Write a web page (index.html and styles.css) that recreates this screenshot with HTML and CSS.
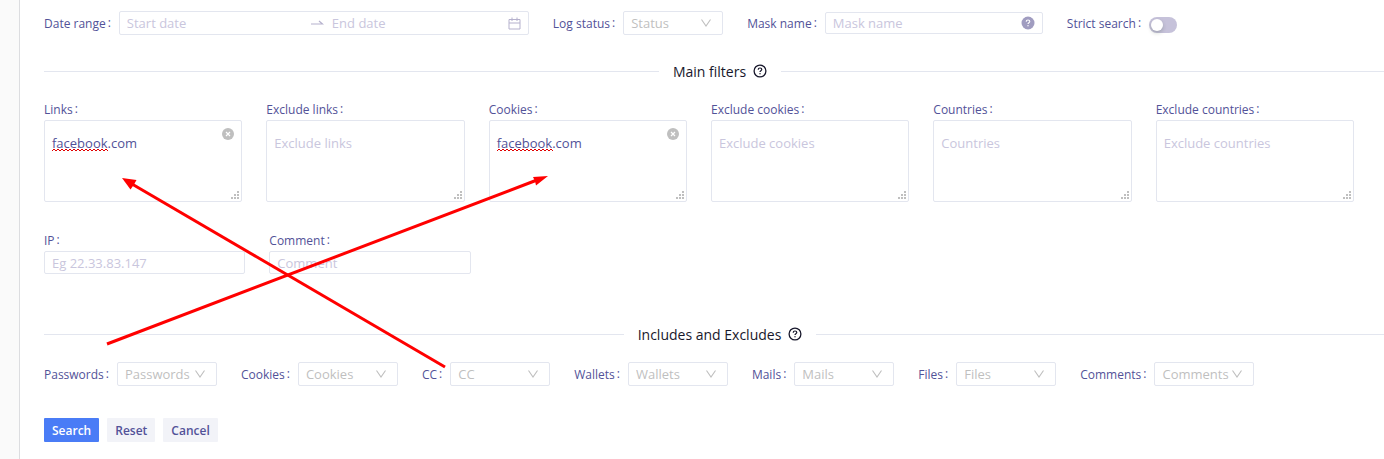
FILE: index.html
```html
<!doctype html>
<html lang="en">
<head>
<meta charset="UTF-8">
<title>Log search</title>
<meta name="viewport" content="width=device-width, initial-scale=1.0">
<link rel="stylesheet" href="styles.css">
</head>
<body>
<svg class="sprite" width="0" height="0" aria-hidden="true">
  <symbol id="chevron" viewBox="0 0 12 12">
    <path d="M1.5 2.5L6 9l4.500-6.500" fill="none" stroke="currentColor" stroke-width="1.100"/>
  </symbol>
  <symbol id="question" viewBox="0 0 14 14">
    <circle cx="7" cy="7" r="5.900" fill="none" stroke="currentColor" stroke-width="1.300"/>
    <path d="M5.200 5.800C5.200 4.600 6 4 7 4s1.800.7 1.800 1.600c0 1.200-1.800 1.200-1.800 2.500" fill="none" stroke="currentColor" stroke-width="1.200"/>
    <rect x="6.400" y="9.100" width="1.200" height="1.200" fill="currentColor"/>
  </symbol>
  <symbol id="question-filled" viewBox="0 0 14 14">
    <circle cx="7" cy="7" r="6.500" fill="currentColor"/>
    <path d="M5.200 5.800C5.200 4.600 6 4 7 4s1.800.7 1.800 1.600c0 1.200-1.800 1.200-1.800 2.500" fill="none" stroke="#fff" stroke-width="1.100"/>
    <rect x="6.400" y="9.100" width="1.200" height="1.200" fill="#fff"/>
  </symbol>
  <symbol id="clear" viewBox="0 0 12 12">
    <circle cx="6" cy="6" r="6" fill="currentColor"/>
    <path d="M4 4l4 4M8 4l-4 4" stroke="#fff" stroke-width="1.200"/>
  </symbol>
  <symbol id="grip" viewBox="0 0 8 8">
    <path d="M6 0h2v2h-2zM3 3h2v2h-2zM6 3h2v2h-2zM0 6h2v2h-2zM3 6h2v2h-2zM6 6h2v2h-2z" fill="currentColor"/>
  </symbol>
  <symbol id="squiggle" viewBox="0 0 56 4">
    <path d="M0 3l2-2 2 2 2-2 2 2 2-2 2 2 2-2 2 2 2-2 2 2 2-2 2 2 2-2 2 2 2-2 2 2 2-2 2 2 2-2 2 2 2-2 2 2 2-2 2 2 2-2 2 2 2-2 2 2" fill="none" stroke="#e00000" stroke-width="1"/>
  </symbol>
</svg>

<main>
<form>
  <div class="row top">
    <div class="field">
      <label for="start">Date range</label>
      <div class="range">
        <input id="start" type="text" placeholder="Start date">
        <svg class="arrow" width="13" height="12" viewBox="0 0 13 12"><path d="M0 7h11.500L8 4" fill="none" stroke="currentColor" stroke-width="1.200"/></svg>
        <input type="text" placeholder="End date" aria-label="End date">
        <svg class="calendar" width="13" height="13" viewBox="0 0 13 13"><path d="M1 2.500h11v9.500h-11zM1 6h11M4 .5v3.500M9 .5v3.500" fill="none" stroke="currentColor"/></svg>
      </div>
    </div>
    <div class="field">
      <label for="status">Log status</label>
      <div class="select">
        <select id="status"><option>Status</option></select>
        <svg><use href="#chevron"/></svg>
      </div>
    </div>
    <div class="field">
      <label for="mask">Mask name</label>
      <div class="mask">
        <input id="mask" type="text" placeholder="Mask name">
        <svg><use href="#question-filled"/></svg>
      </div>
    </div>
    <div class="field">
      <label for="strict">Strict search</label>
      <input class="switch" id="strict" type="checkbox">
    </div>
  </div>

  <h2>Main filters <svg><use href="#question"/></svg></h2>

  <div class="areas">
    <div class="column">
      <label for="links">Links</label>
      <div class="area">
        <textarea id="links" placeholder="Links" spellcheck="false">facebook.com</textarea>
        <svg class="squiggle"><use href="#squiggle"/></svg>
        <button type="button" class="clear" aria-label="Clear"><svg><use href="#clear"/></svg></button>
        <svg class="grip"><use href="#grip"/></svg>
      </div>
    </div>
    <div class="column">
      <label for="exlinks">Exclude links</label>
      <div class="area">
        <textarea id="exlinks" placeholder="Exclude links"></textarea>
        <svg class="grip"><use href="#grip"/></svg>
      </div>
    </div>
    <div class="column">
      <label for="cookies">Cookies</label>
      <div class="area">
        <textarea id="cookies" placeholder="Cookies" spellcheck="false">facebook.com</textarea>
        <svg class="squiggle"><use href="#squiggle"/></svg>
        <button type="button" class="clear" aria-label="Clear"><svg><use href="#clear"/></svg></button>
        <svg class="grip"><use href="#grip"/></svg>
      </div>
    </div>
    <div class="column">
      <label for="excookies">Exclude cookies</label>
      <div class="area">
        <textarea id="excookies" placeholder="Exclude cookies"></textarea>
        <svg class="grip"><use href="#grip"/></svg>
      </div>
    </div>
    <div class="column">
      <label for="countries">Countries</label>
      <div class="area">
        <textarea id="countries" placeholder="Countries"></textarea>
        <svg class="grip"><use href="#grip"/></svg>
      </div>
    </div>
    <div class="column">
      <label for="excountries">Exclude countries</label>
      <div class="area">
        <textarea id="excountries" placeholder="Exclude countries"></textarea>
        <svg class="grip"><use href="#grip"/></svg>
      </div>
    </div>
  </div>

  <div class="inputs">
    <div class="column">
      <label for="ip">IP</label>
      <input id="ip" type="text" placeholder="Eg 22.33.83.147">
    </div>
    <div class="column">
      <label for="comment">Comment</label>
      <input id="comment" type="text" placeholder="Comment">
    </div>
  </div>

  <h2>Includes and Excludes <svg><use href="#question"/></svg></h2>

  <div class="row">
    <div class="field">
      <label for="has-passwords">Passwords</label>
      <div class="select">
        <select id="has-passwords"><option>Passwords</option></select>
        <svg><use href="#chevron"/></svg>
      </div>
    </div>
    <div class="field">
      <label for="has-cookies">Cookies</label>
      <div class="select">
        <select id="has-cookies"><option>Cookies</option></select>
        <svg><use href="#chevron"/></svg>
      </div>
    </div>
    <div class="field">
      <label for="has-cc">CC</label>
      <div class="select">
        <select id="has-cc"><option>CC</option></select>
        <svg><use href="#chevron"/></svg>
      </div>
    </div>
    <div class="field">
      <label for="has-wallets">Wallets</label>
      <div class="select">
        <select id="has-wallets"><option>Wallets</option></select>
        <svg><use href="#chevron"/></svg>
      </div>
    </div>
    <div class="field">
      <label for="has-mails">Mails</label>
      <div class="select">
        <select id="has-mails"><option>Mails</option></select>
        <svg><use href="#chevron"/></svg>
      </div>
    </div>
    <div class="field">
      <label for="has-files">Files</label>
      <div class="select">
        <select id="has-files"><option>Files</option></select>
        <svg><use href="#chevron"/></svg>
      </div>
    </div>
    <div class="field">
      <label for="has-comments">Comments</label>
      <div class="select">
        <select id="has-comments"><option>Comments</option></select>
        <svg><use href="#chevron"/></svg>
      </div>
    </div>
  </div>

  <div class="buttons">
    <button type="submit" class="primary">Search</button>
    <button type="reset">Reset</button>
    <button type="button">Cancel</button>
  </div>
</form>
</main>

<!-- arrows drawn over the form -->
<svg class="marks" width="560" height="380" viewBox="0 0 560 380" aria-hidden="true">
  <g stroke="#f00" stroke-width="3">
    <path d="M445 367L132 184"/>
    <path d="M107 344L537 180"/>
  </g>
  <path d="M122 178L136.500 180 134 184.500 130.500 189.500z" fill="#f00"/>
  <path d="M548 176L533 177 535 181 536 185.500z" fill="#f00"/>
</svg>
</body>
</html>
```
FILE: styles.css
```css
body {
  margin: 0;
  padding-left: 19px;
  background: #fafafa;
  color: #525298;
  font-family: "Open Sans", sans-serif;
  font-size: 13px;
  overflow: hidden;
}
main {
  min-height: 100vh;
  box-sizing: border-box;
  padding: 11px 12px 18px 24px;
  border-left: 1px solid #dcdde0;
  background: #fff;
}
button, input, select, textarea {
  box-sizing: border-box;
  margin: 0;
  color: inherit;
  font-family: inherit;
  font-size: 13px;
}
input, textarea {
  border: 1px solid #e3e6ef;
  border-radius: 2px;
  padding: 0 7px;
  background: #fff;
}
input::placeholder, textarea::placeholder {
  color: #c9c6dd;
}
label {
  font-size: 12px;
  line-height: 20px;
  white-space: nowrap;
}
label::after {
  content: ":";
  margin: 0 8px 0 2px;
  vertical-align: 1px;
}
.sprite {
  position: absolute;
}
.row {
  display: flex;
  gap: 24px;
}
.field {
  display: flex;
  align-items: center;
  height: 24px;
}
.range {
  display: flex;
  align-items: center;
  box-sizing: border-box;
  width: 410px;
  height: 24px;
  padding: 0 7px;
  border: 1px solid #e3e6ef;
  border-radius: 2px;
  color: #b5b1cd;
}
.range input {
  flex: 1;
  min-width: 0;
  height: 22px;
  padding: 0;
  border: 0;
}
.arrow {
  margin: 0 8px;
}
.select {
  position: relative;
  width: 100px;
}
.select select {
  display: block;
  width: 100%;
  height: 24px;
  padding: 0 7px;
  border: 1px solid #e3e6ef;
  border-radius: 2px;
  background: #fff;
  color: #bfbfbf;
  appearance: none;
}
.select svg {
  position: absolute;
  top: 6px;
  right: 11px;
  width: 12px;
  height: 12px;
  color: #bfbfbf;
  pointer-events: none;
}
.mask {
  display: flex;
  align-items: center;
  box-sizing: border-box;
  width: 218px;
  height: 22px;
  padding: 0 7px;
  border: 1px solid #e3e6ef;
  border-radius: 2px;
}
.mask input {
  flex: 1;
  min-width: 0;
  height: 20px;
  padding: 0;
  border: 0;
}
.mask svg {
  width: 14px;
  height: 14px;
  color: #a09cc0;
}
.switch {
  width: 28px;
  height: 16px;
  margin-top: 4px;
  padding: 2px;
  border: 0;
  border-radius: 8px;
  background: #c6c2da;
  appearance: none;
}
.switch::before {
  content: "";
  display: block;
  width: 12px;
  height: 12px;
  border-radius: 6px;
  background: #fff;
  box-shadow: 0 2px 4px rgba(0, 35, 11, 0.2);
}
h2 {
  display: flex;
  align-items: center;
  height: 24px;
  margin: 24px -24px 16px 0;
  color: #17172b;
  font-size: 14px;
  font-weight: normal;
}
h2::before, h2::after {
  content: "";
  flex: 1;
  border-top: 1px solid #e3e6ef;
}
h2::before {
  margin-right: 14px;
}
h2::after {
  margin-left: 14px;
}
h2 svg {
  width: 14px;
  height: 14px;
  margin-left: 7px;
}
.areas, .inputs {
  display: grid;
  grid-template-columns: repeat(6, 1fr);
  column-gap: 24px;
}
.areas {
  margin-right: 18px;
}
.inputs {
  margin: 28px 0 48px;
}
.column {
  display: flex;
  flex-direction: column;
}
.area {
  position: relative;
}
textarea {
  display: block;
  width: 100%;
  height: 82px;
  padding: 12px 7px;
  line-height: 20px;
  resize: none;
}
.squiggle {
  position: absolute;
  top: 28px;
  left: 8px;
  width: 56px;
  height: 4px;
}
.clear {
  position: absolute;
  top: 8px;
  right: 8px;
  width: 12px;
  height: 12px;
  padding: 0;
  border: 0;
  background: none;
  color: #bfbfbf;
}
.clear svg {
  display: block;
  width: 12px;
  height: 12px;
}
.grip {
  position: absolute;
  right: 3px;
  bottom: 3px;
  width: 8px;
  height: 8px;
  color: #bfbfbf;
}
.inputs input {
  height: 23px;
}
.buttons {
  display: flex;
  gap: 8px;
  margin-top: 32px;
}
.buttons button {
  height: 24px;
  padding: 0 8px;
  border: 0;
  border-radius: 1px;
  background: #f2f3f8;
  font-size: 12px;
  font-weight: 600;
}
.buttons .primary {
  background: #4a7cf6;
  color: #fff;
}
.marks {
  position: absolute;
  top: 0;
  left: 0;
  pointer-events: none;
}
```
